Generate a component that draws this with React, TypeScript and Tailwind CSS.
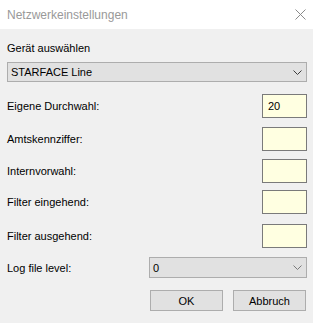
const fields = [
    { label: 'Eigene Durchwahl:', value: '20', mt: 'mt-[12px]' },
    { label: 'Amtskennziffer:', value: '', mt: 'mt-[9px]' },
    { label: 'Internvorwahl:', value: '', mt: 'mt-[8px]' },
    { label: 'Filter eingehend:', value: '', mt: 'mt-[7px]' },
    { label: 'Filter ausgehend:', value: '', mt: 'mt-[10px]' },
];

function Chevron({ dark }: { dark?: boolean }) {
    return (
        <svg width="9" height="5" viewBox="0 0 9 5" className="shrink-0">
            <path d="M0.5 0.5 L4.5 4.5 L8.5 0.5" fill="none" stroke={dark ? '#3c3c3c' : '#7a7a7a'} strokeWidth="1" />
        </svg>
    );
}

export default function App() {
    return (
        <div className="w-[313px] h-[323px] flex flex-col bg-[#f0f0f0] text-[11px] leading-[16px] text-black font-['Liberation_Sans',sans-serif]">
            {/* Title bar */}
            <div className="h-[29px] bg-white flex items-center justify-between pl-[7px] pr-[7px] shrink-0">
                <span className="text-[12px] text-[#999999]">Netzwerkeinstellungen</span>
                <svg width="11" height="11" viewBox="0 0 11 11">
                    <path d="M0.5 0.5 L10.5 10.5 M10.5 0.5 L0.5 10.5" stroke="#8a8a8a" strokeWidth="1" />
                </svg>
            </div>

            {/* Body */}
            <div className="flex flex-col pl-[7px] pr-[6px] pt-[11px]">
                <span>Gerät auswählen</span>
                <div className="mt-[6px] h-[20px] border border-[#adadad] bg-[#e1e1e1] flex items-center justify-between pl-[3px] pr-[4px]">
                    <span>STARFACE Line</span>
                    <Chevron dark />
                </div>

                {fields.map((f) => (
                    <div key={f.label} className={`${f.mt} flex items-center justify-between`}>
                        <span>{f.label}</span>
                        <div className="w-[45px] h-[24px] border border-[#7a7a7a] bg-[#ffffe1] flex items-center pl-[5px]">
                            {f.value}
                        </div>
                    </div>
                ))}

                <div className="mt-[9px] flex items-center justify-between">
                    <span>Log file level:</span>
                    <div className="w-[158px] h-[21px] border border-[#adadad] bg-[#e1e1e1] flex items-center justify-between pl-[3px] pr-[4px]">
                        <span>0</span>
                        <Chevron />
                    </div>
                </div>

                <div className="mt-[12px] flex justify-end gap-[10px] pr-[1px]">
                    <button className="w-[73px] h-[21px] border border-[#adadad] bg-[#e1e1e1] flex items-center justify-center">OK</button>
                    <button className="w-[73px] h-[21px] border border-[#adadad] bg-[#e1e1e1] flex items-center justify-center">Abbruch</button>
                </div>
            </div>
        </div>
    );
}
